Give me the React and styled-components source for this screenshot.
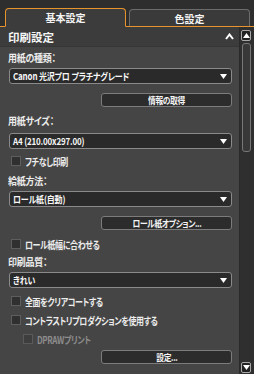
import React from "react";
import styled, { createGlobalStyle } from "styled-components";

const Global = createGlobalStyle`
  html, body { margin: 0; padding: 0; background: #2e2e2e; }
  body {
    font-family: "Noto Sans CJK JP", "Noto Sans", sans-serif;
    font-feature-settings: "palt";
  }
`;

const ORANGE = "#e8942c";

const Root = styled.div`
  width: 254px;
  height: 374px;
  display: flex;
  flex-direction: column;
  background: #2e2e2e;
  color: #f0f0f0;
  overflow: hidden;
`;

const TabBar = styled.div`
  height: 26px;
  display: flex;
  align-items: flex-end;
  gap: 3px;
  padding: 0 4px 0 5px;
  border-bottom: 1px solid ${ORANGE};
`;

const Tab = styled.div`
  flex: 1;
  height: ${(p) => (p.$active ? "19px" : "17px")};
  margin-bottom: ${(p) => (p.$active ? "-1px" : "0")};
  box-sizing: border-box;
  display: flex;
  align-items: center;
  justify-content: center;
  font-size: 10px;
  font-weight: 700;
  color: #f4f4f4;
  border-radius: 4px 4px 0 0;
  background: ${(p) => (p.$active ? "#3c3c3c" : "#3a3a3a")};
  border: 1px solid ${(p) => (p.$active ? ORANGE : "#6c6c6c")};
  border-bottom: ${(p) => (p.$active ? "1px solid #3c3c3c" : "none")};
`;

const Body = styled.div`
  flex: 1;
  display: flex;
  min-height: 0;
`;

const Panel = styled.div`
  width: 239px;
  display: flex;
  flex-direction: column;
  background: #454545;
  border-right: 1px solid #2a2a2a;
`;

const Header = styled.div`
  height: 19px;
  display: flex;
  align-items: center;
  justify-content: space-between;
  padding: 0 5px 0 8px;
  background: #3c3c3c;
  border-bottom: 1px solid #363636;
  font-size: 11.5px;
  font-weight: 700;
  color: #f6f6f6;
`;

const Content = styled.div`
  display: flex;
  flex-direction: column;
  padding: 0 7px 0 9px;
`;

/* Condensed text run, imitating the narrow kana of the original UI font */
const Narrow = styled.span`
  display: inline-block;
  white-space: nowrap;
  letter-spacing: ${(p) => p.$ls}px;
  transform: scaleX(${(p) => p.$sx});
  transform-origin: ${(p) => (p.$center ? "center" : "left")} center;
`;

const Label = styled.div`
  height: 16px;
  line-height: 16px;
  margin-top: ${(p) => p.$mt || 0}px;
  margin-left: -1px;
  font-size: 10px;
  font-weight: 700;
  color: #ececec;
`;

const Select = styled.div`
  height: 16px;
  box-sizing: border-box;
  margin-top: ${(p) => p.$mt || 0}px;
  display: flex;
  align-items: center;
  justify-content: space-between;
  padding: 0 4px 0 3px;
  background: #2a2a2a;
  border: 1px solid #8a8a8a;
  border-radius: 3px;
  font-size: 9.5px;
  font-weight: 700;
  color: #f8f8f8;
`;

const Button = styled.div`
  align-self: flex-end;
  width: 131px;
  height: 14px;
  box-sizing: border-box;
  margin-top: ${(p) => p.$mt || 0}px;
  display: flex;
  align-items: center;
  justify-content: center;
  background: #2c2c2c;
  border: 1px solid #7c7c7c;
  border-radius: 3px;
  font-size: 9.5px;
  font-weight: 700;
  color: #f4f4f4;
`;

const CheckRow = styled.div`
  height: 16px;
  margin-top: ${(p) => p.$mt || 0}px;
  padding-left: ${(p) => (p.$indent ? 14 : 2)}px;
  display: flex;
  align-items: center;
  gap: 4px;
  font-size: 10px;
  font-weight: 700;
  color: ${(p) => (p.$disabled ? "#8c8c8c" : "#ececec")};
`;

const Box = styled.span`
  width: 10px;
  height: 10px;
  box-sizing: border-box;
  background: ${(p) => (p.$disabled ? "#3e3e3e" : "#303030")};
  border: 1px solid ${(p) => (p.$disabled ? "#5a5a5a" : "#5e5e5e")};
  flex-shrink: 0;
`;

const ScrollCol = styled.div`
  flex: 1;
  display: flex;
  flex-direction: column;
  align-items: flex-start;
  padding: 3px 0 1px 1px;
  background: #2f2f2f;
`;

const ArrowBtn = styled.div`
  width: 10px;
  height: 11px;
  box-sizing: border-box;
  display: flex;
  align-items: center;
  justify-content: center;
  background: #222;
  border: 1px solid #a8a8a8;
  border-radius: 2px;
`;

const Thumb = styled.div`
  width: 9px;
  height: 109px;
  margin-top: 2px;
  margin-left: 1px;
  box-sizing: border-box;
  background: #383838;
  border: 1px solid #777;
  border-radius: 3px;
`;

const Spacer = styled.div`
  flex: 1;
`;

const Tri = ({ down = true, size = 7 }) => (
  <svg width={size} height={size - 2} viewBox="0 0 7 5">
    {down ? (
      <polygon points="0,0 7,0 3.5,5" fill="#fff" />
    ) : (
      <polygon points="0,5 7,5 3.5,0" fill="#fff" />
    )}
  </svg>
);

const Chevron = () => (
  <svg width="9" height="7" viewBox="0 0 9 7">
    <polyline points="1,6 4.5,1.5 8,6" fill="none" stroke="#fff" strokeWidth="2" />
  </svg>
);

const Check = ({ children, mt, indent, disabled }) => (
  <CheckRow $mt={mt} $indent={indent} $disabled={disabled}>
    <Box $disabled={disabled} />
    <Narrow $ls={-0.5} $sx={0.8}>{children}</Narrow>
  </CheckRow>
);

const Sel = ({ children, mt }) => (
  <Select $mt={mt}>
    <Narrow $ls={-0.2} $sx={0.84}>{children}</Narrow>
    <Tri />
  </Select>
);

const Btn = ({ children, mt }) => (
  <Button $mt={mt}>
    <Narrow $ls={-0.5} $sx={0.82} $center>{children}</Narrow>
  </Button>
);

const Lbl = ({ children, mt }) => (
  <Label $mt={mt}>
    <Narrow $ls={-0.3} $sx={0.9}>{children}</Narrow>
  </Label>
);

export default function App() {
  return (
    <Root>
      <Global />
      <TabBar>
        <Tab $active>基本設定</Tab>
        <Tab>色設定</Tab>
      </TabBar>
      <Body>
        <Panel>
          <Header>
            <span>印刷設定</span>
            <Chevron />
          </Header>
          <Content>
            <Lbl mt={3}>用紙の種類：</Lbl>
            <Sel mt={2}>Canon 光沢プロ プラチナグレード</Sel>
            <Btn mt={9}>情報の取得</Btn>
            <Lbl mt={6}>用紙サイズ：</Lbl>
            <Sel mt={4}>A4 (210.00x297.00)</Sel>
            <Check mt={4}>フチなし印刷</Check>
            <Lbl mt={4}>給紙方法：</Lbl>
            <Sel mt={2}>ロール紙(自動)</Sel>
            <Btn mt={9}>ロール紙オプション...</Btn>
            <Check mt={6}>ロール紙幅に合わせる</Check>
            <Lbl mt={2}>印刷品質：</Lbl>
            <Sel mt={2}>きれい</Sel>
            <Check mt={5}>全面をクリアコートする</Check>
            <Check mt={3}>コントラストリプロダクションを使用する</Check>
            <Check mt={3} indent disabled>DPRAWプリント</Check>
            <Btn mt={3}>設定...</Btn>
          </Content>
        </Panel>
        <ScrollCol>
          <ArrowBtn>
            <Tri down={false} />
          </ArrowBtn>
          <Thumb />
          <Spacer />
          <ArrowBtn>
            <Tri />
          </ArrowBtn>
        </ScrollCol>
      </Body>
    </Root>
  );
}
